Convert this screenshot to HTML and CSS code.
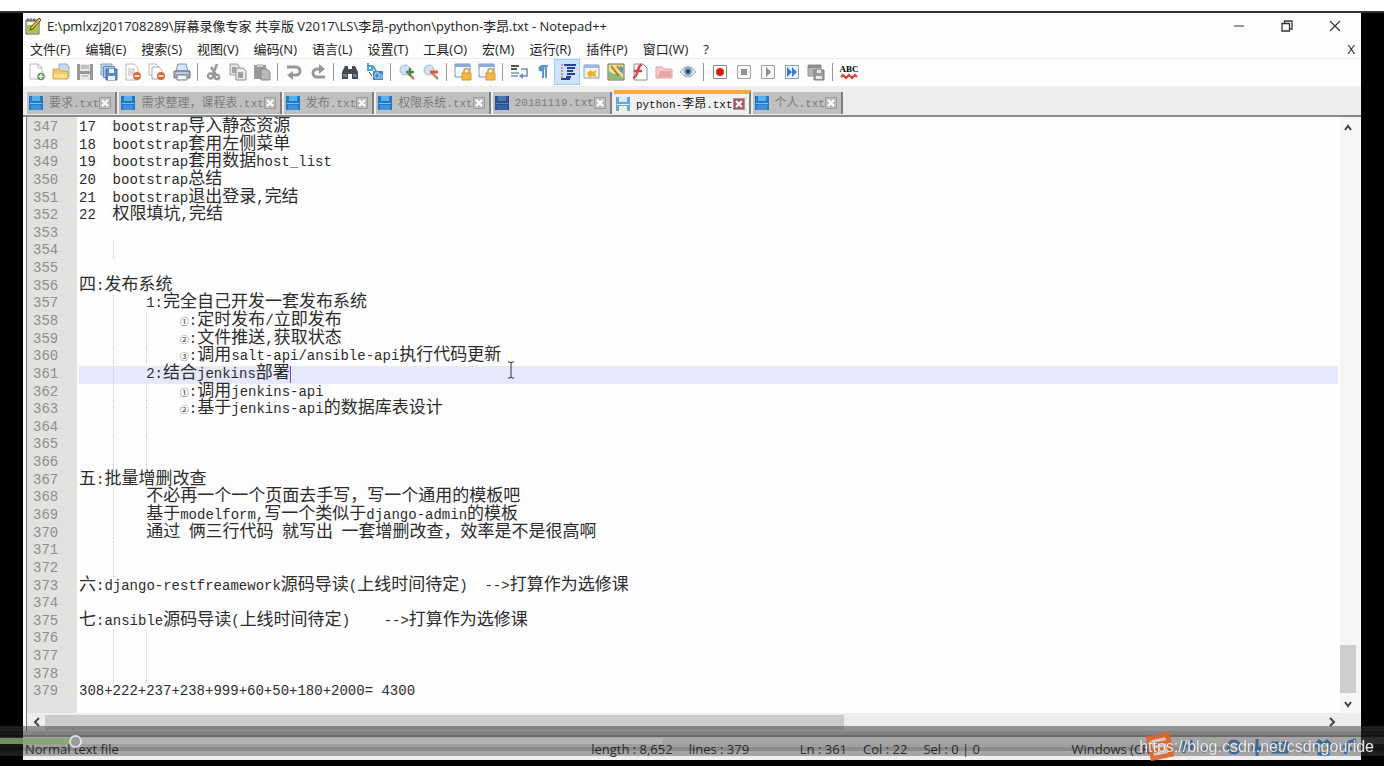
FILE: index.html
```html
<!DOCTYPE html>
<html lang="zh-CN">
<head>
<meta charset="utf-8">
<meta name="viewport" content="width=device-width, initial-scale=1">
<title>python-李昂.txt - Notepad++</title>
<link rel="stylesheet" href="styles.css">
</head>
<body>
<svg width="0" height="0" class="defs" aria-hidden="true">
  <symbol id="disk" viewBox="0 0 14 14"><path d="M0 0h14v14H0z" fill="#2478c4"/><path d="M3 0h8v5H3z" fill="#58b0ec"/><path d="M1 7h12v1H1z" fill="#7cc4f4"/><path d="M2 9h10v5H2z" fill="#3c92dc"/></symbol>
  <symbol id="cross" viewBox="0 0 12 12"><path d="M.5.5h11v11H.5z" fill="currentColor" stroke="#9a9a9a"/><path d="M3 3l6 6M9 3l-6 6" stroke="#fff" stroke-width="2"/></symbol>
  <symbol id="lock" viewBox="0 0 18 18"><path d="M1 1h15v13H1z" fill="#f4f8ff" stroke="#7b92c4"/><path d="M1 1h15v3H1z" fill="#8aa6dc"/><path d="M10 10V8a2.500 2.500 0 0 1 5 0v2" fill="none" stroke="#c8a040" stroke-width="1.500"/><path d="M8 10h9v7H8z" fill="#f2b840" stroke="#d09a38"/></symbol>
</svg>
<div class="window">
  <header class="titlebar">
    <svg class="app" viewBox="0 0 16 18"><path d="M1 3h13v14H1z" fill="#eef4e4" stroke="#555"/><path d="M2 8h11v8H2z" fill="#9ccc3c"/><path d="M2 4h11M3 1v3M6 1v3M9 1v3" stroke="#555"/><path d="M5 13l1-3 8-9 2 2-8 9z" fill="#f2b53c" stroke="#4a4a38"/></svg>
    <h1>E:\pmlxzj201708289\屏幕录像专家 共享版 V2017\LS\李昂-python\python-李昂.txt - Notepad++</h1>
    <div class="controls">
      <button aria-label="最小化"><svg viewBox="0 0 12 12"><path d="M1 6h10" stroke="#333"/></svg></button>
      <button aria-label="还原"><svg viewBox="0 0 12 12"><path d="M1 3.500h7.500V11H1zM3.500 3V1H11v8H9" fill="none" stroke="#333" stroke-width="1.300"/></svg></button>
      <button aria-label="关闭"><svg viewBox="0 0 12 12"><path d="M1 1l10 10M11 1L1 11" stroke="#333" stroke-width="1.200"/></svg></button>
    </div>
  </header>
  <nav class="menu">
    <button>文件(F)</button><button>编辑(E)</button><button>搜索(S)</button><button>视图(V)</button><button>编码(N)</button><button>语言(L)</button><button>设置(T)</button><button>工具(O)</button><button>宏(M)</button><button>运行(R)</button><button>插件(P)</button><button>窗口(W)</button><button>?</button>
    <button class="doc-close">X</button>
  </nav>
  <div class="toolbar-row"><div class="toolbar">
    <button aria-label="新建"><svg viewBox="0 0 18 18"><path d="M2 1h8l4 4v11H2z" fill="#fff" stroke="#b8b8b8"/><path d="M10 1v4h4" fill="none" stroke="#b8b8b8"/><circle cx="13" cy="13.500" r="3.800" fill="#5f9850"/><path d="M13 11v5M10.500 13.500h5" stroke="#fff" stroke-width="1.500"/></svg></button>
    <button aria-label="打开"><svg viewBox="0 0 18 18"><path d="M7 1h8l2 3v10H7z" fill="#c4daf8" stroke="#8cacd8"/><path d="M1 6h5l2 2h8v8H1z" fill="#f2c860" stroke="#d8a848"/><path d="M2 11h13v4H2z" fill="#fae094"/></svg></button>
    <button aria-label="保存"><svg viewBox="0 0 18 18"><path d="M1 1h16v16H1z" fill="#989898"/><path d="M4 1h10v7H4zM4 11h10v6H4z" fill="#e6e6e6"/><path d="M5 3h8M5 5h8M6 13h6" stroke="#999"/></svg></button>
    <button aria-label="全部保存"><svg viewBox="0 0 18 18"><path d="M1 1h11v11H1z" fill="#c2d4ec" stroke="#7c9cc8"/><path d="M3.500 3.500h11v11h-11z" fill="#b0c8e8" stroke="#6888b8"/><path d="M6 6h11v11H6z" fill="#5c8cc8" stroke="#46709f"/><path d="M9 6h5v4H9zM8 13h7v4H8z" fill="#e4f0fc"/></svg></button>
    <button aria-label="关闭文件"><svg viewBox="0 0 18 18"><path d="M2 1h8l4 4v12H2z" fill="#fff" stroke="#b8b8b8"/><path d="M4 6h7M4 8h7M4 10h6M4 12h5" stroke="#bbb"/><circle cx="13" cy="13" r="4" fill="#dc6838"/><path d="M10.500 13h5" stroke="#fff" stroke-width="1.600"/></svg></button>
    <button aria-label="全部关闭"><svg viewBox="0 0 18 18"><path d="M1 1h7l2 2v9H1z" fill="#fff" stroke="#b8b8b8"/><path d="M4 4h7l3 3v9H4z" fill="#fff" stroke="#a8a8a8"/><circle cx="13" cy="13" r="4" fill="#dc6838"/><path d="M10.500 13h5" stroke="#fff" stroke-width="1.600"/></svg></button>
    <button aria-label="打印"><svg viewBox="0 0 18 18"><path d="M5 1h8l2 7H3z" fill="#d4e6fa" stroke="#7894b4"/><path d="M1 8h16v7H1z" fill="#a4adb8" stroke="#68727e"/><path d="M4 12h10v5H4z" fill="#f4f4f4" stroke="#727c88"/><path d="M3 10h12" stroke="#e4e8ee"/></svg></button>
    <i></i>
    <button aria-label="剪切"><svg viewBox="0 0 18 18"><path d="M12 1L8 11M6 4l5 8" stroke="#999" stroke-width="2.500"/><circle cx="5.500" cy="13" r="2.500" fill="none" stroke="#999" stroke-width="2.300"/><circle cx="12" cy="14" r="2.200" fill="none" stroke="#999" stroke-width="2.300"/></svg></button>
    <button aria-label="复制"><svg viewBox="0 0 18 18"><path d="M1 1h7l2 2v9H1z" fill="#e4e4e4" stroke="#999"/><path d="M7 5h7l3 3v9H7z" fill="#e8e8e8" stroke="#8c8c8c"/><path d="M9 9h5v6H9zM3 4h4v6H3z" fill="#a0a0a0"/></svg></button>
    <button aria-label="粘贴"><svg viewBox="0 0 18 18"><path d="M1 2h12v14H1z" fill="#999"/><path d="M4 1h6v3H4z" fill="#ccc"/><path d="M8 6h6l3 3v8H8z" fill="#b8b8b8" stroke="#888"/></svg></button>
    <i></i>
    <button aria-label="撤销"><svg viewBox="0 0 18 18"><path d="M2 4h9a4 4 0 0 1 0 8H7" fill="none" stroke="#999" stroke-width="3"/><path d="M8 8v9l-6-5z" fill="#999"/></svg></button>
    <button aria-label="重做"><svg viewBox="0 0 18 18"><path d="M16 14H8a4 4 0 0 1 0-8h4" fill="none" stroke="#999" stroke-width="3"/><path d="M10 1v10l6-5z" fill="#999"/></svg></button>
    <i></i>
    <button aria-label="查找"><svg viewBox="0 0 18 18"><path d="M4 3h3v3h4V3h3l3 6v7h-6v-5H7v5H1V9z" fill="#444a50"/><path d="M3 11v3M5 11v3M13 11v3M15 11v3" stroke="#aab4bc"/></svg></button>
    <button aria-label="替换"><svg viewBox="0 0 18 18"><path d="M2 0v7h4V3H2M7 3l3 5" fill="none" stroke="#48a0d4" stroke-width="2"/><path d="M7 8h10v9H7z" fill="#3c84c8"/><path d="M9 10h4v5H9zM13 12h3v3h-3" fill="none" stroke="#b8dcfa"/><path d="M3 9l3 4" stroke="#444"/></svg></button>
    <i></i>
    <button aria-label="放大"><svg viewBox="0 0 18 18"><circle cx="7" cy="7" r="5" fill="#cfe0f4" stroke="#a4b8d4"/><path d="M10 10l6 6" stroke="#b88c68" stroke-width="2.500"/><path d="M12 5v8M8 9h8" stroke="#448a48" stroke-width="2.500"/></svg></button>
    <button aria-label="缩小"><svg viewBox="0 0 18 18"><circle cx="7" cy="7" r="5" fill="#cfe0f4" stroke="#a4b8d4"/><path d="M10 10l6 6" stroke="#b88c68" stroke-width="2.500"/><path d="M8 9h8" stroke="#e05838" stroke-width="3"/></svg></button>
    <i></i>
    <button aria-label="同步垂直滚动"><svg><use href="#lock"/></svg></button>
    <button aria-label="同步水平滚动"><svg><use href="#lock"/></svg></button>
    <i></i>
    <button aria-label="自动换行"><svg viewBox="0 0 18 18"><path d="M1 3h8M1 6h6" stroke="#555" stroke-width="2"/><path d="M1 10h8M1 13h7" stroke="#98aed0" stroke-width="2"/><path d="M11 6h6v7h-5" fill="none" stroke="#688cc0" stroke-width="1.500"/><path d="M13 10v6l-4-3z" fill="#688cc0"/></svg></button>
    <button aria-label="显示所有字符"><svg viewBox="0 0 18 18"><path d="M7 3h7M9 3v12M12 3v12" stroke="#5c94d4" stroke-width="2"/><circle cx="7.500" cy="5.500" r="3" fill="#5c94d4"/></svg></button>
    <button class="on" aria-label="缩进参考线"><svg viewBox="0 0 18 18"><path d="M6 2h12M9 5h8M9 8h6M9 11h8M3 16h9M8 14h5" stroke="#26409c" stroke-width="2"/><path d="M4 1v14" stroke="#c04848" stroke-dasharray="2 1"/></svg></button>
    <button aria-label="自定义语言"><svg viewBox="0 0 18 18"><path d="M1 2h15v13H1z" fill="#fff6d4" stroke="#7c9cd4"/><path d="M1 2h15v3H1z" fill="#98b8ec"/><path d="M4 10l4-3 1 2 5-2-2 4 2 3-5-1-3 2z" fill="#eaae38"/></svg></button>
    <button aria-label="文档地图"><svg viewBox="0 0 18 18"><path d="M1 1h16v16H1z" fill="#ece49c" stroke="#686858"/><path d="M2 8l5 3 4-1 5 5v1H2z" fill="#8ebc74"/><path d="M4 3l8 10M10 3l4 5" stroke="#b87434" stroke-width="2"/><path d="M13 2l3 3v6l-3-3z" fill="#5c94b8"/></svg></button>
    <button aria-label="函数列表"><svg viewBox="0 0 18 18"><path d="M3 1h9l4 4v12H3z" fill="#fff" stroke="#8c8c8c"/><path d="M11 2c-5-1-3 12-9 13M3 8h8" fill="none" stroke="#d84444" stroke-width="2.500"/></svg></button>
    <button aria-label="文件夹"><svg viewBox="0 0 18 18"><path d="M1 4h6l2 2h8v9H1z" fill="#f6caca" stroke="#e0a4a4"/><path d="M5 8h11v6H3z" fill="#eba4a4"/></svg></button>
    <button aria-label="监视"><svg viewBox="0 0 18 18"><path d="M1 9q8-11 16 0-8 10-16 0" fill="#e2ebf2" stroke="#98a4ac"/><circle cx="9" cy="8.500" r="4" fill="#6ca0c4"/><circle cx="9" cy="8.500" r="2" fill="#284050"/></svg></button>
    <i></i>
    <button aria-label="录制宏"><svg viewBox="0 0 18 18"><path d="M2.500 2.500h13v13h-13z" fill="#fff" stroke="#8c8c8c"/><circle cx="9" cy="9" r="4" fill="#cc2010"/></svg></button>
    <button aria-label="停止"><svg viewBox="0 0 18 18"><path d="M2.500 2.500h13v13h-13z" fill="#f8f8f8" stroke="#a0a0a0"/><path d="M6 6h6v6H6z" fill="#929292"/></svg></button>
    <button aria-label="播放"><svg viewBox="0 0 18 18"><path d="M2.500 2.500h13v13h-13z" fill="#f8f8f8" stroke="#a0a0a0"/><path d="M7 4l5 5-5 5z" fill="#929292"/></svg></button>
    <button aria-label="多次播放"><svg viewBox="0 0 18 18"><path d="M2.500 2.500h13v13h-13z" fill="#ecf4ff" stroke="#889cb8"/><path d="M4 4l5 5-5 5zM9 4l5 5-5 5z" fill="#347cc8"/></svg></button>
    <button aria-label="保存宏"><svg viewBox="0 0 18 18"><path d="M1 2h13v11H1z" fill="#b4b4b4" stroke="#929292"/><path d="M1 2h13v3H1z" fill="#8c8c8c"/><path d="M7 7h10v10H7z" fill="#9c9c9c" stroke="#808080"/><path d="M10 7h4v3h-4zM9 13h6v3H9z" fill="#e8e8e8"/></svg></button>
    <i></i>
    <button aria-label="拼写检查"><svg viewBox="0 0 18 18"><text x="9" y="9" text-anchor="middle" class="abc">ABC</text><path d="M1 14l2-2 3 3 3-3 3 3 3-3 2 2" fill="none" stroke="#dc3c30" stroke-width="2"/></svg></button>
  </div></div>
  <div class="tabs">
    <div class="tab"><svg class="file"><use href="#disk"/></svg><button class="name"><span>要求</span>.txt</button><button class="x" aria-label="关闭"><svg><use href="#cross"/></svg></button></div>
    <div class="tab"><svg class="file"><use href="#disk"/></svg><button class="name"><span>需求整理，课程表</span>.txt</button><button class="x" aria-label="关闭"><svg><use href="#cross"/></svg></button></div>
    <div class="tab"><svg class="file"><use href="#disk"/></svg><button class="name"><span>发布</span>.txt</button><button class="x" aria-label="关闭"><svg><use href="#cross"/></svg></button></div>
    <div class="tab"><svg class="file"><use href="#disk"/></svg><button class="name"><span>权限系统</span>.txt</button><button class="x" aria-label="关闭"><svg><use href="#cross"/></svg></button></div>
    <div class="tab dark"><svg class="file"><use href="#disk"/></svg><button class="name">20181119.txt</button><button class="x" aria-label="关闭"><svg><use href="#cross"/></svg></button></div>
    <div class="tab active"><svg class="file" viewBox="0 0 14 14"><path d="M0 0h14v14H0z" fill="#6ca4d8"/><path d="M3 0h8v5H3z" fill="#d4ecfc"/><path d="M1 7h12v1H1z" fill="#eef8ff"/><path d="M3 9h8v5H3z" fill="#e8f4d8"/></svg><button class="name">python-<span>李昂</span>.txt</button><button class="x" aria-label="关闭"><svg><use href="#cross"/></svg></button></div>
    <div class="tab"><svg class="file"><use href="#disk"/></svg><button class="name"><span>个人</span>.txt</button><button class="x" aria-label="关闭"><svg><use href="#cross"/></svg></button></div>
  </div>
  <main class="editor">
    <ol class="code">
      <li><b>347</b><p>17  bootstrap<span>导入静态资源</span></p></li>
      <li><b>348</b><p>18  bootstrap<span>套用左侧菜单</span></p></li>
      <li><b>349</b><p>19  bootstrap<span>套用数据</span>host_list</p></li>
      <li><b>350</b><p>20  bootstrap<span>总结</span></p></li>
      <li><b>351</b><p>21  bootstrap<span>退出登录</span>,<span>完结</span></p></li>
      <li><b>352</b><p>22  <span>权限填坑</span>,<span>完结</span></p></li>
      <li><b>353</b><p></p></li>
      <li class="g1"><b>354</b><p></p></li>
      <li><b>355</b><p></p></li>
      <li><b>356</b><p><span>四</span>:<span>发布系统</span></p></li>
      <li class="g1"><b>357</b><p>        1:<span>完全自己开发一套发布系统</span></p></li>
      <li class="g2"><b>358</b><p>            <em>①</em>:<span>定时发布</span>/<span>立即发布</span></p></li>
      <li class="g2"><b>359</b><p>            <em>②</em>:<span>文件推送</span>,<span>获取状态</span></p></li>
      <li class="g2"><b>360</b><p>            <em>③</em>:<span>调用</span>salt-api/ansible-api<span>执行代码更新</span></p></li>
      <li class="g1 current"><b>361</b><p>        2:<span>结合</span>jenkins<span>部署</span><i class="caret"></i></p></li>
      <li class="g2"><b>362</b><p>            <em>①</em>:<span>调用</span>jenkins-api</p></li>
      <li class="g2"><b>363</b><p>            <em>②</em>:<span>基于</span>jenkins-api<span>的数据库表设计</span></p></li>
      <li class="g2"><b>364</b><p></p></li>
      <li class="g2"><b>365</b><p></p></li>
      <li class="g2"><b>366</b><p></p></li>
      <li><b>367</b><p><span>五</span>:<span>批量增删改查</span></p></li>
      <li class="g1"><b>368</b><p>        <span>不必再一个一个页面去手写，写一个通用的模板吧</span></p></li>
      <li class="g1"><b>369</b><p>        <span>基于</span>modelform,<span>写一个类似于</span>django-admin<span>的模板</span></p></li>
      <li class="g1"><b>370</b><p>        <span>通过</span> <span>俩三行代码</span> <span>就写出</span> <span>一套增删改查，效率是不是很高啊</span></p></li>
      <li class="g1"><b>371</b><p></p></li>
      <li class="g1"><b>372</b><p></p></li>
      <li><b>373</b><p><span>六</span>:django-restfreamework<span>源码导读</span>(<span>上线时间待定</span>)  --&gt;<span>打算作为选修课</span></p></li>
      <li><b>374</b><p></p></li>
      <li><b>375</b><p><span>七</span>:ansible<span>源码导读</span>(<span>上线时间待定</span>)    --&gt;<span>打算作为选修课</span></p></li>
      <li class="g2"><b>376</b><p></p></li>
      <li class="g2"><b>377</b><p></p></li>
      <li class="g2"><b>378</b><p></p></li>
      <li><b>379</b><p>308+222+237+238+999+60+50+180+2000= 4300</p></li>
    </ol>
    <div class="vscroll">
      <svg viewBox="0 0 10 10"><path d="M2 7l3-4 3 4" fill="none" stroke="#444" stroke-width="2"/></svg>
      <div class="thumb"></div>
      <svg viewBox="0 0 10 10"><path d="M2 3l3 4 3-4" fill="none" stroke="#444" stroke-width="2"/></svg>
    </div>
    <svg class="ibeam" viewBox="0 0 8 18"><path d="M1 1h2l1 1 1-1h2M4 2v14M1 17h2l1-1 1 1h2" fill="none" stroke="#333"/></svg>
  </main>
  <div class="hscroll">
    <svg viewBox="0 0 10 10"><path d="M7 1L3 5l4 4" fill="none" stroke="#444" stroke-width="2"/></svg>
    <div class="track"><div class="thumb"></div></div>
    <svg viewBox="0 0 10 10"><path d="M3 1l4 4-4 4" fill="none" stroke="#444" stroke-width="2"/></svg>
  </div>
  <footer class="status">
    <span>Normal text file</span>
    <span class="pos"><span>length : 8,652</span><span>lines : 379</span></span>
    <span class="pos"><span>Ln : 361</span><span>Col : 22</span><span>Sel : 0 | 0</span></span>
    <span>Windows (CR</span>
  </footer>
</div>
<div class="player"><input type="range" min="0" max="1000" value="50" aria-label="播放进度"></div>
<svg class="ime" viewBox="0 0 216 30">
  <g transform="rotate(-12 18 15)"><path d="M6 3h24v25H6z" fill="#e2622a"/><path d="M25 9H12v6h11v7H10" fill="none" stroke="#d8d0cc" stroke-width="3"/></g>
  <g fill="none" stroke="#2c6498" stroke-width="3"><path d="M42 10v12M49 9v12M42 15h10M61 21l4-4"/><circle cx="92" cy="16" r="6"/><path d="M89 15h2M94 15h2" stroke-width="2"/><path d="M115 8v10M110 15q5 8 10 0M115 20v5"/><path d="M131 12h14v9h-14zM133 16h10"/><path d="M177 10l4 3 4-3 4 4-3 3v6h-9v-6l-3-3zM203 23l4-12 7-2M201 15l9 3"/></g>
  <circle cx="163" cy="17" r="6" fill="#7c8c98"/>
</svg>
<div class="watermark">https://blog.csdn.net/csdngouride</div>
</body>
</html>
```
FILE: styles.css
```css
* { box-sizing: border-box; }
body {
  margin: 0;
  min-height: 100vh;
  display: flex;
  flex-direction: column;
  background: #000;
  border-top: 11px solid #fff;
  padding-bottom: 6px;
  color: #222;
  font-family: "Open Sans", "Noto Sans CJK SC", sans-serif;
}
.defs { position: absolute; }
button {
  border: 0;
  padding: 0;
  margin: 0;
  background: none;
  font: inherit;
  color: inherit;
  white-space: nowrap;
}
.window {
  flex: 1;
  display: flex;
  flex-direction: column;
  margin: 2px 23px 0;
  background: #fdfdfd;
}
body::before {
  content: "";
  position: absolute;
  top: 11px;
  left: 0;
  right: 0;
  height: 2px;
  background: #333;
}

.titlebar { display: flex; align-items: center; height: 26px; padding: 0 20px 0 2px; }
.app { width: 16px; height: 18px; margin-right: 6px; }
h1 { margin: 0; flex: 1; font-size: 13px; line-height: 26px; font-weight: 400; white-space: nowrap; }
.controls { display: flex; gap: 36px; }
.controls svg { display: block; width: 12px; height: 12px; }

.menu { display: flex; gap: 15px; height: 20px; padding: 0 6px 0 7px; border-bottom: 1px solid #ececec; font-size: 13px; line-height: 18px; }
.doc-close { margin-left: auto; }

.toolbar-row { height: 27px; padding-left: 2px; }
.toolbar { width: 836px; height: 26px; display: flex; align-items: center; justify-content: space-between; }
.toolbar button { width: 24px; height: 24px; display: flex; align-items: center; justify-content: center; }
.toolbar svg { width: 18px; height: 18px; overflow: visible; }
.toolbar i { width: 1px; height: 18px; margin: 0 4px 0 3px; background: #999; }
.toolbar .on { background: #cce4fa; box-shadow: 0 0 0 1px #a4ccf0; }
.abc { font: bold 9px "Liberation Serif", serif; }

.tabs { display: flex; align-items: flex-end; gap: 2px; height: 31px; padding: 0 4px 1px; background: #ededed; border-bottom: 2px solid #888; }
.tab { display: flex; align-items: center; height: 22px; padding: 0 4px 0 2px; background: #bfbfbf; border-right: 2px solid #808080; color: #7c7c7c; font: 11px/20px "Liberation Mono", monospace; }
.tab .name { margin-left: 6px; }
.tab .name span { font: 12px/20px "Noto Sans CJK SC", sans-serif; }
.tab svg { display: block; }
.file { width: 14px; height: 14px; }
.x { color: #bcbcbc; }
.x svg { width: 12px; height: 12px; }
.tab.dark .file { filter: hue-rotate(15deg) brightness(.7); }
.tab.active { height: 24px; background: #f0f0f0; border-top: 4px solid #f9a938; color: #111; }
.active .x { color: #a85868; }

.editor { position: relative; flex: 1; display: flex; border-left: 1px solid #777; margin-left: 3px; margin-right: 1px; }
.code {
  flex: 1;
  display: grid;
  grid-auto-rows: minmax(0, 1fr);
  margin: 0;
  padding: 2px 0 12px;
  list-style: none;
  background: linear-gradient(to right, #e1e1df 50px, #fdfdfd 50px);
  color: #2c2c2c;
  font: 14px/17px "Liberation Mono", "Noto Sans CJK SC", monospace;
}
.code li { display: grid; grid-template-columns: 52px 1fr; }
.code b { padding-left: 6px; font-weight: 400; color: #8e8e8e; }
.code p { margin: 0; white-space: pre; background-repeat: repeat-y; }
.code span { font: 17px/0 "Noto Sans CJK SC", sans-serif; }
.code em { font: 9px/0 "Noto Sans CJK SC", sans-serif; }
.g1 p { background-image: linear-gradient(#c4c4c4 50%, transparent 50%); background-size: 1px 2px; background-position: 34px 0; }
.g2 p {
  background-image: linear-gradient(#c4c4c4 50%, transparent 50%), linear-gradient(#c4c4c4 50%, transparent 50%);
  background-size: 1px 2px;
  background-position: 34px 0, 67px 0;
}
.current p { background-color: #e6e8fb; }
.caret { display: inline-block; width: 1px; height: 17px; background: #8040c0; vertical-align: top; }
.vscroll { width: 22px; display: flex; flex-direction: column; align-items: center; padding: 6px 4px 4px 2px; background: linear-gradient(to right, #fdfdfd 2px, #f5f5f5 2px); }
.vscroll svg { width: 10px; height: 10px; }
.vscroll .thumb { width: 16px; height: 48px; margin: auto 0 6px; background: #cdcdcd; }
.ibeam { position: absolute; left: 36%; top: 41%; width: 8px; height: 18px; }
.hscroll { display: flex; align-items: center; height: 18px; margin-left: 3px; padding: 0 24px 0 5px; background: #ededed; border-left: 1px solid #777; }
.hscroll svg { width: 10px; height: 10px; }
.track { flex: 1; height: 15px; margin: 0 3px; }
.track .thumb { width: 62.500%; height: 100%; background: #cbcbcb; }

.status { display: grid; grid-template-columns: 567fr 209fr 272fr 290fr; height: 29px; padding: 0 0 0 2px; background: #f0f0f0; font-size: 13px; line-height: 36px; white-space: nowrap; }
.pos { display: flex; gap: 16px; }

.player {
  position: fixed;
  left: 0;
  right: 0;
  bottom: 10px;
  height: 30px;
  background: linear-gradient(rgba(60,60,60,.5) 5px, rgba(45,45,45,.56) 5px, rgba(45,45,45,.56) 9px, rgba(30,30,30,.64) 9px, rgba(30,30,30,.64) 11px, rgba(90,90,90,.5) 11px, rgba(90,90,90,.5) 18px, rgba(55,55,55,.44) 18px, rgba(55,55,55,.44) 21px, rgba(40,40,40,.5) 21px, rgba(40,40,40,.5) 25px, rgba(70,70,70,.44) 25px);
}
.player input {
  display: block;
  appearance: none;
  width: 100%;
  height: 6px;
  margin: 12px 0 0;
  background: linear-gradient(to right, rgba(135,165,105,.8) 5.400%, rgba(190,190,190,.5) 5.400%, rgba(190,190,190,.5) 47.800%, transparent 47.800%);
}
.player input::-webkit-slider-thumb {
  appearance: none;
  width: 13px;
  height: 13px;
  border: 2px solid #ddd;
  border-radius: 50%;
  background: #999;
}
.ime { position: fixed; right: 26px; bottom: 5px; width: 216px; height: 30px; opacity: .9; }
.watermark { position: fixed; right: 10px; bottom: 9px; color: rgba(255,255,255,.85); font: 16px/20px "Liberation Sans", sans-serif; text-shadow: 0 0 1px #666; }
```
